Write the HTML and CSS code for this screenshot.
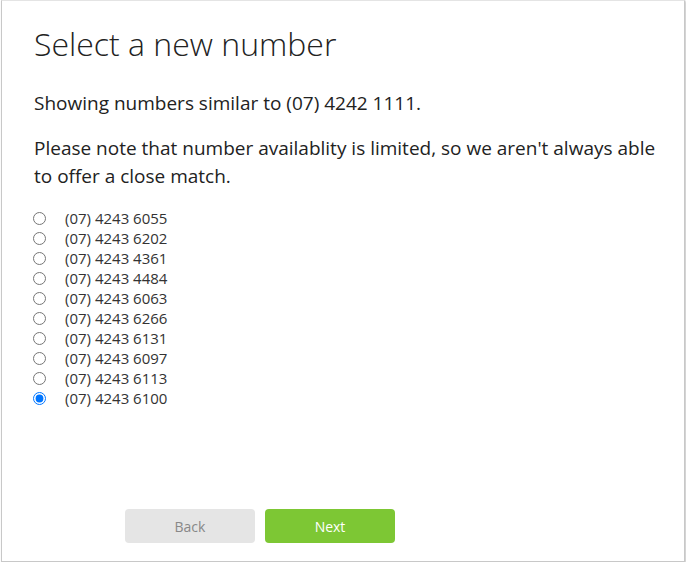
FILE: index.html
```html
<!DOCTYPE html>
<html>
<head>
<meta charset="utf-8">
<link rel="stylesheet" href="styles.css">
</head>
<body>
<div class="frame">
  <h1 class="title">Select a new number</h1>
  <p class="lead">Showing numbers similar to (07) 4242 1111.</p>
  <p class="lead note">Please note that number availablity is limited, so we aren't always able to offer a close match.</p>
  <form class="options">
    <label class="option"><input type="radio" name="num"><span>(07) 4243 6055</span></label>
    <label class="option"><input type="radio" name="num"><span>(07) 4243 6202</span></label>
    <label class="option"><input type="radio" name="num"><span>(07) 4243 4361</span></label>
    <label class="option"><input type="radio" name="num"><span>(07) 4243 4484</span></label>
    <label class="option"><input type="radio" name="num"><span>(07) 4243 6063</span></label>
    <label class="option"><input type="radio" name="num"><span>(07) 4243 6266</span></label>
    <label class="option"><input type="radio" name="num"><span>(07) 4243 6131</span></label>
    <label class="option"><input type="radio" name="num"><span>(07) 4243 6097</span></label>
    <label class="option"><input type="radio" name="num"><span>(07) 4243 6113</span></label>
    <label class="option"><input type="radio" name="num" checked><span>(07) 4243 6100</span></label>
  </form>
  <div class="actions">
    <button class="btn btn-back" type="button">Back</button>
    <button class="btn btn-next" type="button">Next</button>
  </div>
</div>
</body>
</html>
```
FILE: styles.css
```css
html, body {
  margin: 0;
  padding: 0;
  background: #ffffff;
}
body {
  font-family: "Open Sans", "Liberation Sans", sans-serif;
  color: #222;
}
.frame {
  box-sizing: border-box;
  width: 684px;
  height: 562px;
  margin-left: 1px;
  border: 1px solid #c8c8c8;
  border-top-color: #e4e4e4;
  box-shadow: 1px 1px 2px rgba(0,0,0,0.25);
  padding: 23px 0 0 32px;
  display: flex;
  flex-direction: column;
}
.title {
  margin: 0;
  font-size: 32px;
  font-weight: 300;
  line-height: 40px;
  color: #222;
}
.lead {
  margin: 0;
  font-size: 19px;
  line-height: 28px;
  color: #222;
}
.title + .lead {
  margin-top: 25px;
}
.note {
  margin-top: 17px;
  padding-right: 20px;
}
.options {
  margin-top: 18px;
  display: flex;
  flex-direction: column;
}
.option {
  display: flex;
  align-items: center;
  height: 20px;
  font-size: 15px;
  color: #333;
}
.option input {
  margin: 0 19px 0 -1px;
  width: 13px;
  height: 13px;
}
.actions {
  margin-top: auto;
  margin-bottom: 18px;
  padding-left: 91px;
  display: flex;
  gap: 10px;
}
.btn {
  width: 130px;
  height: 34px;
  border: none;
  border-radius: 4px;
  font-family: "Open Sans", "Liberation Sans", sans-serif;
  font-size: 14px;
}
.btn-back {
  background: #e5e5e5;
  color: #888;
}
.btn-next {
  background: #7dc734;
  color: #fff;
}
```
